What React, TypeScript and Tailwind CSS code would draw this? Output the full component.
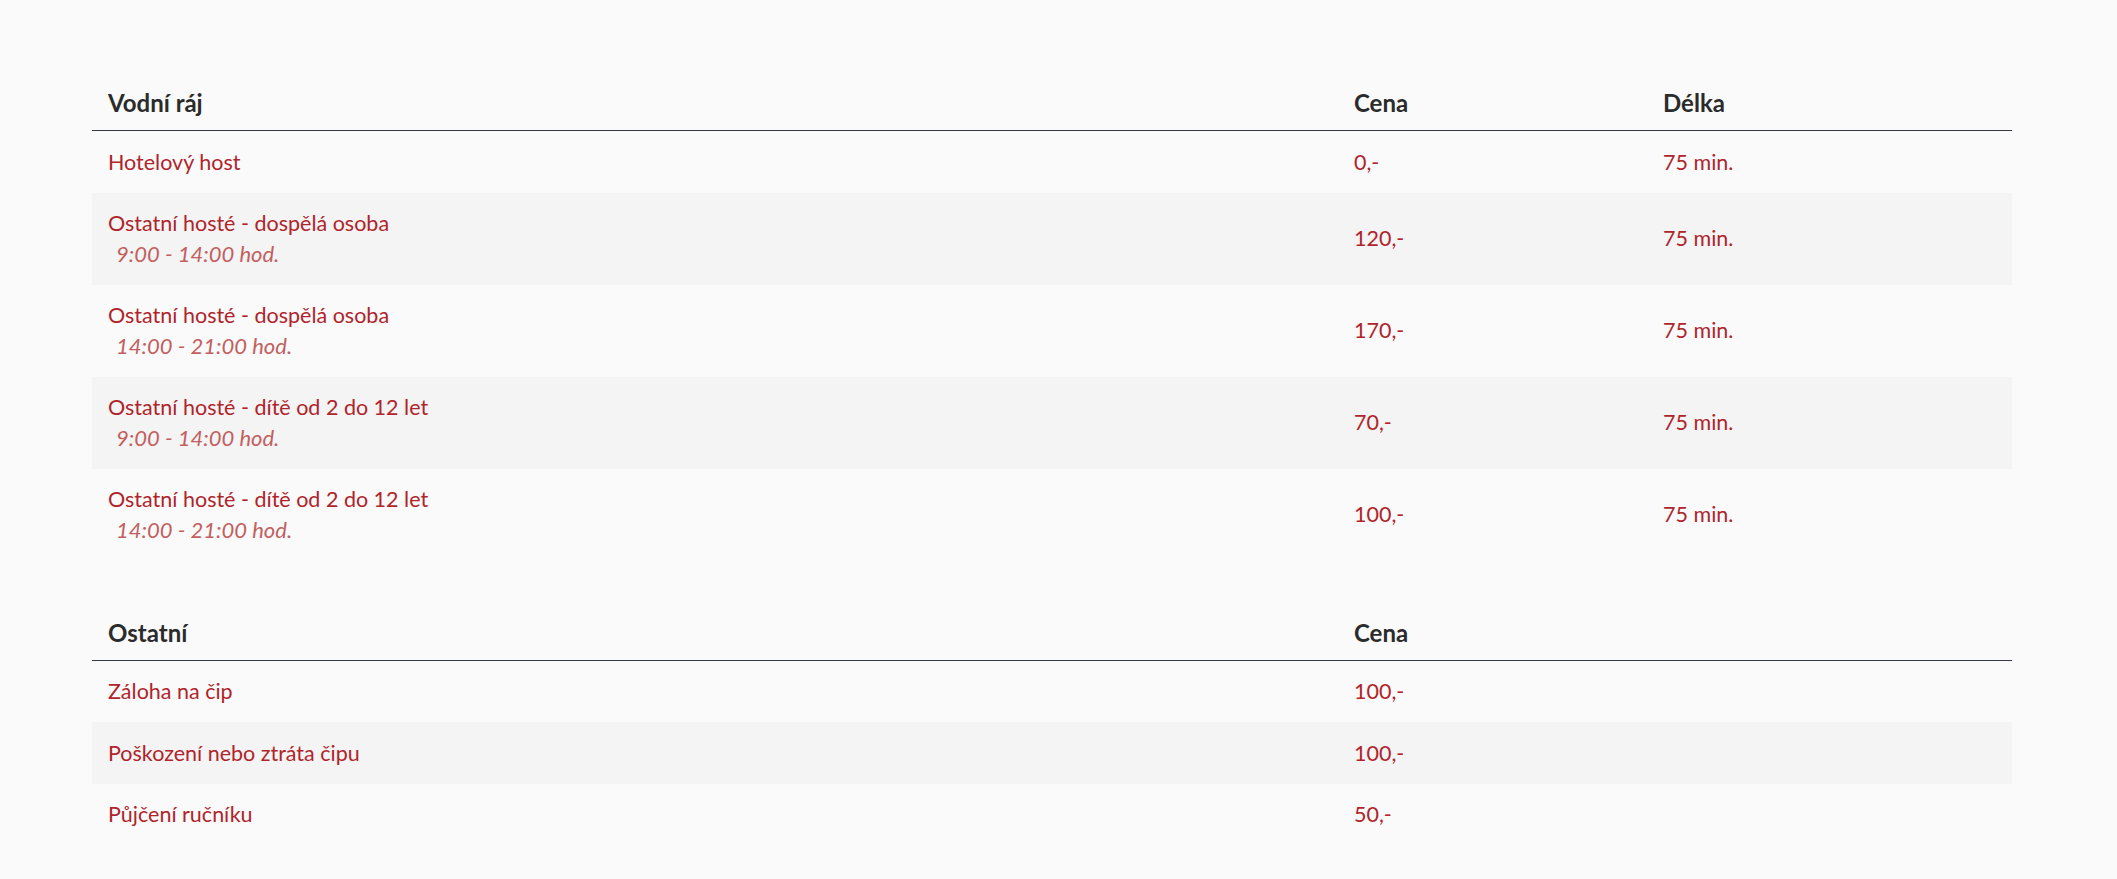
type Row = { name: string; time?: string; price: string; length?: string };

const spa: Row[] = [
  { name: 'Hotelový host', price: '0,-', length: '75 min.' },
  { name: 'Ostatní hosté - dospělá osoba', time: '9:00 - 14:00 hod.', price: '120,-', length: '75 min.' },
  { name: 'Ostatní hosté - dospělá osoba', time: '14:00 - 21:00 hod.', price: '170,-', length: '75 min.' },
  { name: 'Ostatní hosté - dítě od 2 do 12 let', time: '9:00 - 14:00 hod.', price: '70,-', length: '75 min.' },
  { name: 'Ostatní hosté - dítě od 2 do 12 let', time: '14:00 - 21:00 hod.', price: '100,-', length: '75 min.' },
];

const other: Row[] = [
  { name: 'Záloha na čip', price: '100,-' },
  { name: 'Poškození nebo ztráta čipu', price: '100,-' },
  { name: 'Půjčení ručníku', price: '50,-' },
];

function PriceTable({ title, third, rows }: { title: string; third?: string; rows: Row[] }) {
  return (
    <table className="w-[1920px] table-fixed border-collapse">
      <colgroup>
        <col className="w-[1246px]" />
        <col className="w-[309px]" />
        <col className="w-[365px]" />
      </colgroup>
      <thead>
        <tr className="border-b border-[#343a40]">
          <th className="px-4 pt-[20px] pb-[12px] text-left text-[24px] leading-[30px] font-bold text-[#2b2b2b]">{title}</th>
          <th className="px-4 pt-[20px] pb-[12px] text-left text-[24px] leading-[30px] font-bold text-[#2b2b2b]">Cena</th>
          <th className="px-4 pt-[20px] pb-[12px] text-left text-[24px] leading-[30px] font-bold text-[#2b2b2b]">{third}</th>
        </tr>
      </thead>
      <tbody>
        {rows.map((r, i) => (
          <tr key={i} className={i % 2 === 1 ? 'bg-[#f4f4f4]' : ''}>
            <td className="px-4 py-[15.5px] align-middle">
              <div>{r.name}</div>
              {r.time && <div className="pl-2 text-[22px] italic text-[#c2605f]">{r.time}</div>}
            </td>
            <td className="px-4 py-[15.5px] align-middle">{r.price}</td>
            <td className="px-4 py-[15.5px] align-middle">{r.length}</td>
          </tr>
        ))}
      </tbody>
    </table>
  );
}

export default function App() {
  return (
    <div className="min-h-[879px] bg-[#fafafa] pt-[68px] pl-[92px] text-[21.5px] leading-[30.5px] text-[#b0242b] font-['Lato','Open_Sans',sans-serif]">
      <PriceTable title="Vodní ráj" third="Délka" rows={spa} />
      <div className="h-[37px]" />
      <PriceTable title="Ostatní" rows={other} />
    </div>
  );
}
